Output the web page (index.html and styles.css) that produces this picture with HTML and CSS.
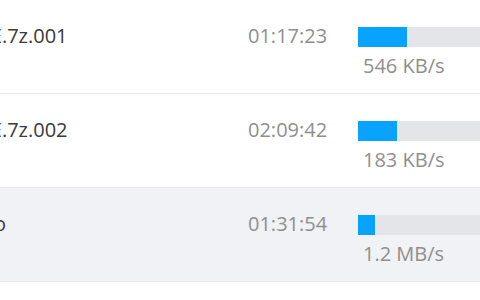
FILE: index.html
```html
<!DOCTYPE html>
<html lang="en">
<head>
<meta charset="utf-8">
<title>Downloads</title>
<link rel="stylesheet" href="styles.css">
</head>
<body>
<div class="list">
  <div class="row">
    <div class="name">Project_Files_ARCHIVE.7z.001</div>
    <div class="time">01:17:23</div>
    <div class="progress">
      <div class="track"><div class="fill" style="width:30.6%"></div></div>
      <div class="speed">546 KB/s</div>
    </div>
  </div>
  <div class="row">
    <div class="name">Project_Files_ARCHIVE.7z.002</div>
    <div class="time">02:09:42</div>
    <div class="progress">
      <div class="track"><div class="fill" style="width:24.4%"></div></div>
      <div class="speed">183 KB/s</div>
    </div>
  </div>
  <div class="row active">
    <div class="name">Project_Files_Concerto</div>
    <div class="time">01:31:54</div>
    <div class="progress">
      <div class="track"><div class="fill" style="width:10.6%"></div></div>
      <div class="speed">1.2 MB/s</div>
    </div>
  </div>
</div>
</body>
</html>
```

FILE: styles.css
```css
html, body {
  margin: 0;
  padding: 0;
  background: #ffffff;
  overflow: hidden;
}

body {
  font-family: "Open Sans", "Noto Sans", sans-serif;
  font-size: 20px;
  line-height: 28px;
}

.list {
  width: 900px;
  margin-left: -219px;
}

.row {
  display: grid;
  grid-template-columns: 467px 110px 160px 1fr;
  height: 93px;
  border-bottom: 1px solid #ebebeb;
  background: #ffffff;
}

.row.active {
  background: #f0f2f5;
}

.name {
  padding-left: 16px;
  padding-top: 22px;
  color: #3a3a3a;
  white-space: nowrap;
}

.time {
  padding-top: 22px;
  color: #8f8f8f;
}

.progress {
  padding-top: 27px;
}

.track {
  height: 20px;
  background: #e4e5e9;
}

.fill {
  height: 100%;
  background: #08a3ff;
}

.speed {
  margin-top: 5px;
  padding-left: 5px;
  color: #8f8f8f;
}
```
